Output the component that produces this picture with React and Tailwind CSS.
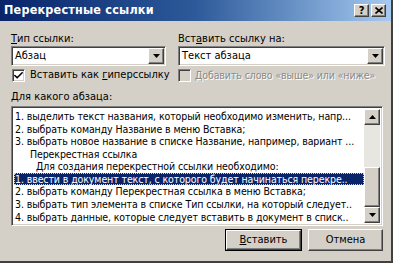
import { Check } from "lucide-react";

const font = { fontFamily: '"DejaVu Sans Condensed", "Liberation Sans", Tahoma, sans-serif' };

const raised =
  "border border-t-white border-l-white border-b-[#404040] border-r-[#404040] shadow-[inset_-1px_-1px_0_#808080,inset_1px_1px_0_#d4d0c8] bg-[#d4d0c8]";
const sunken =
  "border border-t-[#808080] border-l-[#808080] border-b-white border-r-white shadow-[inset_1px_1px_0_#404040,inset_-1px_-1px_0_#d4d0c8]";

function Arrow({ up }) {
  return (
    <svg width="7" height="4" viewBox="0 0 7 4">
      <path d={up ? "M3.5 0 L7 4 L0 4 Z" : "M0 0 L7 0 L3.5 4 Z"} fill="#000" />
    </svg>
  );
}

function Combo({ value }) {
  return (
    <div className={`h-[20px] bg-white flex items-center ${sunken}`}>
      <span className="flex-1 pl-[3px] text-black">{value}</span>
      <div className={`w-[16px] h-[16px] mr-[1px] flex items-center justify-center ${raised}`}>
        <Arrow />
      </div>
    </div>
  );
}

const rows = [
  { t: "1. выделить текст названия, который необходимо изменить, напр..." },
  { t: "2. выбрать команду Название в меню Вставка;" },
  { t: "3. выбрать новое название в списке Название, например, вариант ..." },
  { t: "Перекрестная ссылка", indent: "pl-[16px]" },
  { t: "Для создания перекрестной ссылки необходимо:", indent: "pl-[22px]" },
  { t: "1. ввести в документ текст, с которого будет начинаться перекре..", sel: true },
  { t: "2. выбрать команду Перекрестная ссылка в меню Вставка;" },
  { t: "3. выбрать тип элемента в списке Тип ссылки, на который следует.." },
  { t: "4. выбрать данные, которые следует вставить в документ в списк.." },
];

export default function App() {
  return (
    <div
      style={font}
      className="w-[393px] h-[263px] bg-[#d4d0c8] flex flex-col overflow-hidden border-r-2 border-b-2 border-r-[#404040] border-b-[#404040]"
    >
      {/* Title bar */}
      <div className="h-[21px] shrink-0 bg-gradient-to-r from-[#0a246a] via-[#2d5a9a] to-[#a6caf0] flex items-center justify-between pl-[4px] pr-[5px]">
        <span className="text-white font-bold text-[12.5px] tracking-[0.2px]">Перекрестные ссылки</span>
        <div className="flex gap-[2px]">
          <div className={`w-[15px] h-[13px] flex items-center justify-center text-[11px] font-bold leading-none text-black ${raised}`}>
            ?
          </div>
          <div className={`w-[15px] h-[13px] flex items-center justify-center ${raised}`}>
            <svg width="8" height="7" viewBox="0 0 8 7">
              <path d="M0.5 0.5 L7.5 6.5 M7.5 0.5 L0.5 6.5" stroke="#000" strokeWidth="1.6" />
            </svg>
          </div>
        </div>
      </div>

      <div className="flex-1 flex flex-col pl-[11px] pr-[6px] text-[11px] text-black whitespace-nowrap">
        {/* Combos */}
        <div className="flex gap-[12px] mt-[11px]">
          <div className="w-[155px] flex flex-col">
            <span className="leading-[14px]">
              <span className="underline">Т</span>ип ссылки:
            </span>
            <Combo value="Абзац" />
          </div>
          <div className="flex-1 flex flex-col">
            <span className="leading-[14px]">
              Вст<span className="underline">а</span>вить ссылку на:
            </span>
            <Combo value="Текст абзаца" />
          </div>
        </div>

        {/* Checkboxes */}
        <div className="flex gap-[12px] mt-[2px] h-[15px] items-center">
          <div className="w-[155px] flex items-center gap-[5px] pl-[1px]">
            <div className={`w-[13px] h-[13px] bg-white flex items-center justify-center ${sunken}`}>
              <Check size={11} strokeWidth={3.5} color="#000" />
            </div>
            <span>
              Вставить как <span className="underline">г</span>иперссылку
            </span>
          </div>
          <div className="flex-1 flex items-center gap-[4px]">
            <div className={`w-[13px] h-[13px] bg-[#d4d0c8] ${sunken}`} />
            <span className="text-[10.5px] tracking-[-0.1px] text-[#8c8a86] [text-shadow:1px_1px_0_#ffffff]">
              Добавить слово «выше» или «ниже»
            </span>
          </div>
        </div>

        <span className="mt-[7px] leading-[14px]">
          <span className="underline">Д</span>ля какого абзаца:
        </span>

        {/* List */}
        <div className={`mt-[2px] mr-[2px] h-[120px] bg-white flex ${sunken} p-[2px]`}>
          <div className="flex-1 flex flex-col overflow-hidden pt-[1px] text-[10.5px] tracking-[-0.1px]">
            {rows.map((r, i) => (
              <div
                key={i}
                className={`h-[13px] leading-[13px] overflow-hidden pl-[1px] ${r.indent || ""} ${
                  r.sel ? "bg-[#0a246a] text-white outline outline-1 outline-dotted outline-[#d4d0c8] -outline-offset-1" : ""
                }`}
              >
                {r.t}
              </div>
            ))}
          </div>
          <div className="w-[16px] flex flex-col bg-[#e8e6e1]">
            <div className={`h-[16px] flex items-center justify-center ${raised}`}>
              <Arrow up />
            </div>
            <div className="flex-1 flex flex-col justify-end">
              <div className={`h-[40px] ${raised}`} />
            </div>
            <div className={`h-[16px] flex items-center justify-center ${raised}`}>
              <Arrow />
            </div>
          </div>
        </div>

        {/* Buttons */}
        <div className="flex justify-end gap-[6px] mt-[3px] mr-[2px]">
          <div className="border border-black">
            <div className={`w-[75px] h-[20px] flex items-center justify-center ${raised}`}>
              <span>
                <span className="underline">В</span>ставить
              </span>
            </div>
          </div>
          <div className={`w-[75px] h-[22px] flex items-center justify-center ${raised}`}>
            Отмена
          </div>
        </div>
      </div>
    </div>
  );
}
